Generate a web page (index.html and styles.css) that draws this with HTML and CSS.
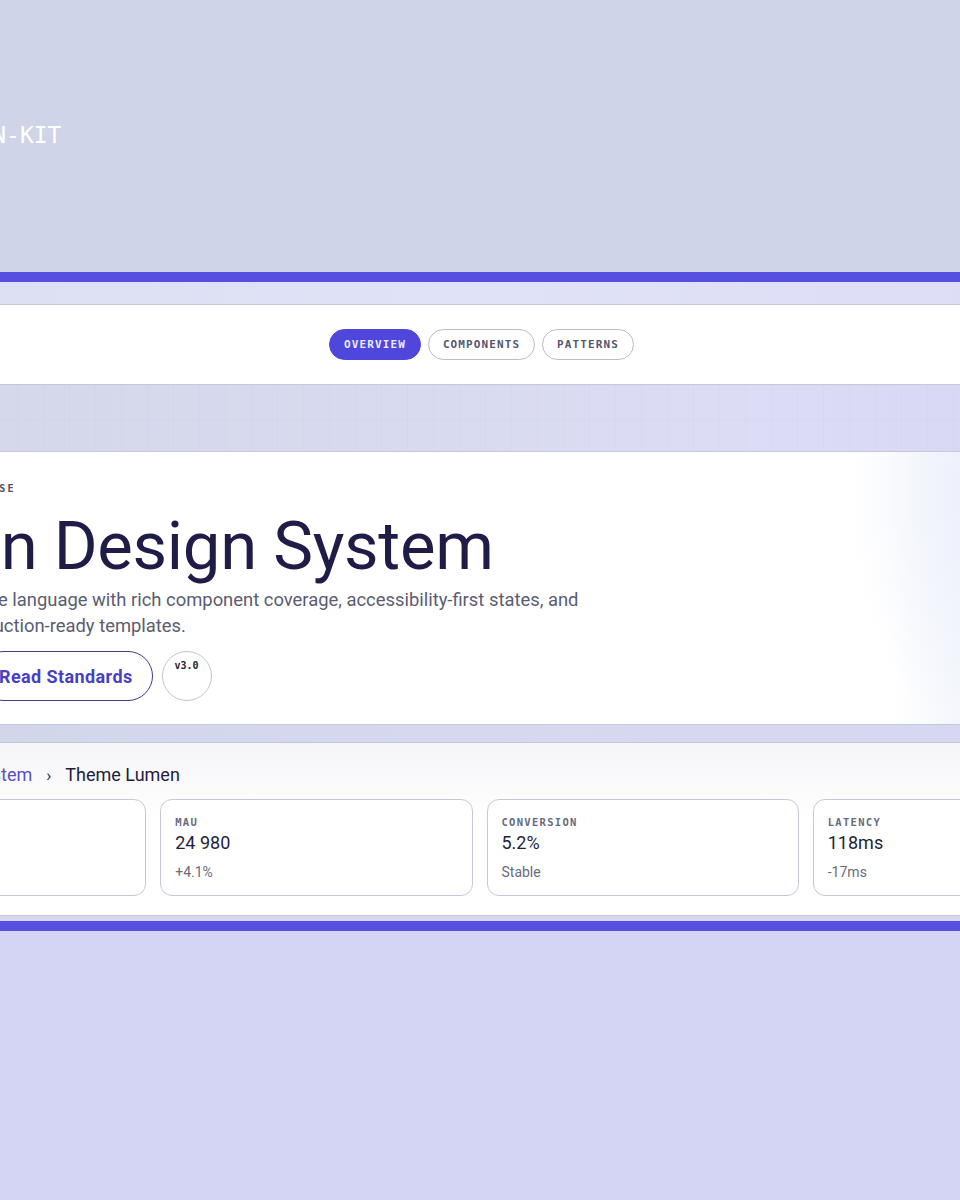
FILE: index.html
```html
<!DOCTYPE html>
<html lang="en">
<head>
<meta charset="utf-8">
<title>Lumen Design System</title>
<link rel="stylesheet" href="styles.css">
</head>
<body>
<div class="stage">
  <header class="masthead">
    <div class="brand">DESIGN-KIT</div>
  </header>
  <div class="rule"></div>
  <div class="band band-top"></div>
  <nav class="nav">
    <a class="pill pill-active">OVERVIEW</a>
    <a class="pill">COMPONENTS</a>
    <a class="pill">PATTERNS</a>
  </nav>
  <div class="band band-grid"></div>
  <section class="hero">
    <div class="eyebrow">ENTERPRISE · SHOWCASE</div>
    <h1 class="title">Lumen Design System</h1>
    <p class="lead">A unified interface language with rich component coverage, accessibility-first states, and dependable, production-ready templates.</p>
    <div class="actions">
      <a class="btn-primary">Get Started</a>
      <a class="btn-outline">Read Standards</a>
      <span class="version">v3.0</span>
    </div>
  </section>
  <div class="band band-mid"></div>
  <section class="lower">
    <div class="crumbs">
      <a class="crumb-link">Lumen Design System</a>
      <span class="crumb-sep">›</span>
      <span class="crumb-current">Theme Lumen</span>
    </div>
    <div class="cards">
      <div class="card">
        <div class="card-label">SESSIONS</div>
        <div class="card-value">128k</div>
        <div class="card-sub">+12%</div>
      </div>
      <div class="card">
        <div class="card-label">MAU</div>
        <div class="card-value">24 980</div>
        <div class="card-sub">+4.1%</div>
      </div>
      <div class="card">
        <div class="card-label">CONVERSION</div>
        <div class="card-value">5.2%</div>
        <div class="card-sub">Stable</div>
      </div>
      <div class="card">
        <div class="card-label">LATENCY</div>
        <div class="card-value">118ms</div>
        <div class="card-sub">-17ms</div>
      </div>
    </div>
  </section>
  <div class="band band-foot"></div>
  <div class="rule"></div>
  <div class="tail"></div>
</div>
</body>
</html>
```

FILE: styles.css
```css
* { box-sizing: border-box; }

html, body {
  margin: 0;
  padding: 0;
  overflow: hidden;
  background: #d4d5f4;
}

body {
  font-family: Roboto, "Noto Sans", sans-serif;
  color: #1f1d47;
}

.stage {
  width: 1339px;
  margin-left: -190px;
  display: flex;
  flex-direction: column;
}

.masthead {
  height: 272px;
  background: #cfd4e8;
  padding: 121px 0 0 113px;
}

.brand {
  font-family: "DejaVu Sans Mono", monospace;
  font-size: 23px;
  line-height: 28px;
  color: #ffffff;
}

.rule {
  height: 10px;
  background: #574fe0;
}

.band-top {
  height: 22px;
  background: linear-gradient(90deg, #dcdff2 0%, #e0e2f7 50%, #dcddf6 100%);
}

.nav {
  height: 81px;
  background: #ffffff;
  border-top: 1px solid #c5c7db;
  border-bottom: 1px solid #c5c7db;
  padding-left: 4px;
  display: flex;
  justify-content: center;
  align-items: center;
  gap: 7px;
}

.pill {
  height: 31px;
  padding: 0 14px;
  border: 1px solid #b9bacd;
  border-radius: 16px;
  display: flex;
  align-items: center;
  font-family: "DejaVu Sans Mono", monospace;
  font-weight: bold;
  font-size: 11px;
  letter-spacing: 1.1px;
  color: #545870;
  background: #ffffff;
}

.pill-active {
  background: #4f47dc;
  border-color: #4f47dc;
  color: #eceaff;
}

.band-grid {
  height: 66px;
  background:
    repeating-linear-gradient(90deg, rgba(255,255,255,0) 0 25px, rgba(196,200,224,0.18) 25px 26px),
    linear-gradient(180deg, rgba(255,255,255,0) 0 34px, rgba(196,200,224,0.16) 34px 35px, rgba(255,255,255,0) 35px),
    linear-gradient(90deg, #d2d6e9 0%, #d8dbef 45%, #dcdcf6 70%, #d6d5f3 100%);
}

.hero {
  height: 274px;
  background:
    radial-gradient(ellipse 150px 260px at 1190px 40px, #e9eefa 0%, rgba(236,240,251,0.6) 45%, rgba(236,240,251,0) 100%),
    linear-gradient(90deg, rgba(240,243,252,0) 0, rgba(240,243,252,0) 1080px, #f1f4fc 1180px),
    #ffffff;
  border-top: 1px solid #c5c7db;
  border-bottom: 1px solid #c5c7db;
  padding: 30px 24px 0 24px;
  display: flex;
  flex-direction: column;
}

.eyebrow {
  margin-left: 9px;
  font-family: "DejaVu Sans Mono", monospace;
  font-weight: bold;
  font-size: 10px;
  line-height: 14px;
  letter-spacing: 2.2px;
  color: #4c4e62;
}

.title {
  margin: 12px 0 0 2px;
  font-family: Roboto, "Noto Sans", sans-serif;
  font-weight: 400;
  font-size: 67px;
  line-height: 76px;
  letter-spacing: -0.3px;
  color: #1f1d47;
}

.lead {
  margin: 3px 0 0 19px;
  text-indent: 6px;
  max-width: 760px;
  font-size: 18.4px;
  line-height: 26px;
  color: #5b5c72;
}

.actions {
  margin-top: 12px;
  display: flex;
  gap: 9px;
  align-items: flex-start;
}

.btn-primary {
  height: 50px;
  width: 135px;
  border-radius: 25px;
  background: #4f47dc;
  color: #ffffff;
  display: flex;
  align-items: center;
  justify-content: center;
  font-size: 17px;
  font-weight: bold;
}

.btn-outline {
  height: 50px;
  padding: 0 19px 0 20px;
  border: 1.5px solid #3f3a8c;
  border-radius: 25px;
  display: flex;
  align-items: center;
  font-size: 18px;
  letter-spacing: 0.4px;
  font-weight: bold;
  color: #4a3fc4;
}

.version {
  width: 50px;
  height: 50px;
  border: 1px solid #c3c3cf;
  border-radius: 50%;
  display: flex;
  justify-content: center;
  padding-top: 8px;
  font-family: "DejaVu Sans Mono", monospace;
  font-weight: bold;
  font-size: 10px;
  line-height: 12px;
  color: #1f1f2e;
}

.band-mid {
  height: 17px;
  background: linear-gradient(90deg, #d1d5e8 0%, #d6d9ee 50%, #d6d6f2 100%);
}

.lower {
  height: 174px;
  background: linear-gradient(180deg, #f5f5f8 0%, #ffffff 45%, #ffffff 100%);
  border-top: 1px solid #c5c7db;
  border-bottom: 1px solid #c5c7db;
  padding: 20px 24px 0 24px;
  display: flex;
  flex-direction: column;
}

.crumbs {
  display: flex;
  align-items: center;
  gap: 14px;
  height: 24px;
  padding-left: 20px;
  font-size: 18px;
  line-height: 24px;
}

.crumb-link { color: #5a4fc6; }
.crumb-sep { color: #2a2a40; font-size: 17px; }
.crumb-current { color: #1f1d3c; }

.cards {
  margin-top: 12px;
  display: grid;
  grid-template-columns: repeat(4, 1fr);
  gap: 14px;
}

.card {
  height: 97px;
  border: 1px solid #c7c7dc;
  border-radius: 12px;
  padding: 15px 14px 0 14px;
  background: #ffffff;
}

.card-label {
  font-family: "DejaVu Sans Mono", monospace;
  font-weight: bold;
  font-size: 10.5px;
  line-height: 14px;
  letter-spacing: 1.3px;
  color: #676a80;
}

.card-value {
  margin-top: 2px;
  font-size: 18px;
  line-height: 24px;
  color: #1f1e3a;
}

.card-sub {
  margin-top: 7px;
  font-size: 14px;
  line-height: 20px;
  color: #6a6b7c;
}

.band-foot {
  height: 5px;
  background: #d7d8ef;
}

.tail {
  height: 300px;
  background: #d4d5f4;
}
```
